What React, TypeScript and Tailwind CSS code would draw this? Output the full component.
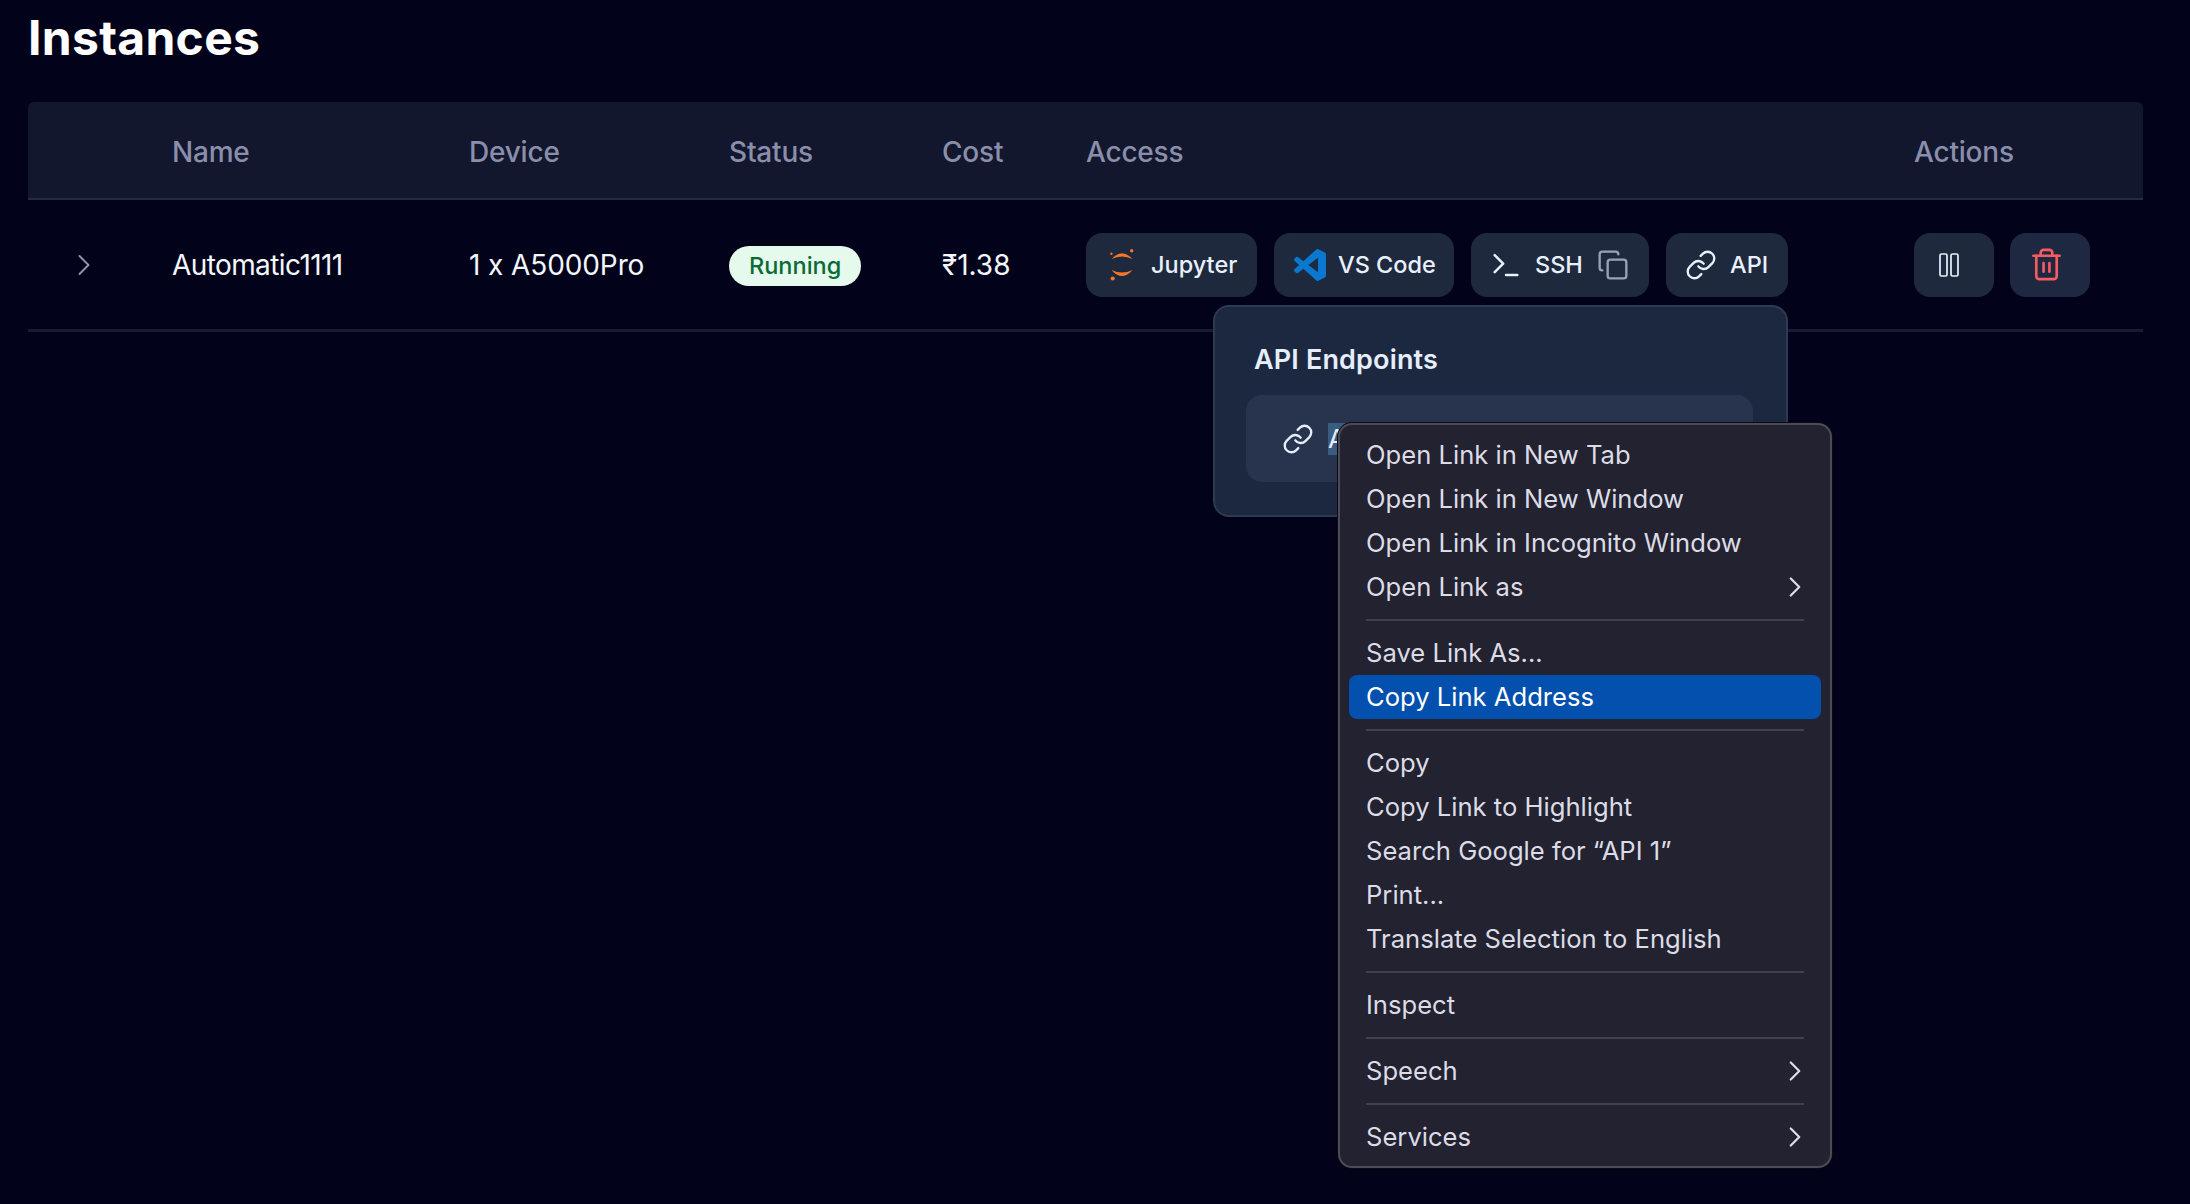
import React from 'react';
import { ChevronRight, Copy, Link, Terminal, Trash2 } from 'lucide-react';

const columns = 'grid grid-cols-[144px_297px_260px_213px_144px_828px_1fr] items-center';

const JupyterLogo = () => (
  <svg viewBox="0 0 24 32" className="w-[24px] h-[32px] text-[#f37726]" fill="currentColor">
    <path d="M1.5 10Q12 -1.5 22.5 10Q12 5 1.5 10Z" />
    <path d="M1.5 21Q12 33 22.5 21Q12 26 1.5 21Z" />
    <circle cx="21.7" cy="1.8" r="1.7" />
    <circle cx="1.4" cy="4.7" r="1.2" />
    <circle cx="2.7" cy="29.5" r="2.1" />
  </svg>
);

const VsCodeLogo = () => (
  <svg viewBox="0 0 24 24" className="w-[32px] h-[32px] text-[#0a78d0]" fill="currentColor">
    <path d="M23.15 2.587L18.21.21a1.494 1.494 0 0 0-1.705.29l-9.46 8.63-4.12-3.128a.999.999 0 0 0-1.276.057L.327 7.261A1 1 0 0 0 .326 8.74L3.899 12 .326 15.26a1 1 0 0 0 .001 1.479L1.65 17.94a.999.999 0 0 0 1.276.057l4.12-3.128 9.46 8.63a1.492 1.492 0 0 0 1.704.29l4.942-2.377A1.5 1.5 0 0 0 24 20.06V3.939a1.5 1.5 0 0 0-.85-1.352zm-5.146 14.861L10.826 12l7.178-5.448v10.896z" />
  </svg>
);

const PauseIcon = () => (
  <svg viewBox="0 0 20 24" className="w-[20px] h-[24px]" fill="none" stroke="#e8f0fb" strokeWidth="1.7">
    <rect x="1" y="1" width="7" height="22" rx="1.5" />
    <rect x="12" y="1" width="7" height="22" rx="1.5" />
  </svg>
);

const AccessButton = ({ className, children }: { className: string; children: React.ReactNode }) => (
  <button className={`flex items-center shrink-0 h-[64px] rounded-[16px] bg-[#1e293d] text-[23.5px] leading-none font-medium text-[#e8f0fb] ${className}`}>
    {children}
  </button>
);

const menuGroups = [
  [
    { label: 'Open Link in New Tab' },
    { label: 'Open Link in New Window' },
    { label: 'Open Link in Incognito Window' },
    { label: 'Open Link as', more: true },
  ],
  [{ label: 'Save Link As...' }, { label: 'Copy Link Address', active: true }],
  [
    { label: 'Copy' },
    { label: 'Copy Link to Highlight' },
    { label: 'Search Google for “API 1”' },
    { label: 'Print...' },
    { label: 'Translate Selection to English' },
  ],
  [{ label: 'Inspect' }],
  [{ label: 'Speech', more: true }],
  [{ label: 'Services', more: true }],
];

export default function App() {
  return (
    <div className="relative w-[2190px] h-[1204px] overflow-hidden bg-[#02031a] pl-[28px] pr-[47px] font-['Inter',sans-serif] text-white">
      <h1 className="h-[102px] pt-[12px] text-[48px] leading-[52px] font-bold tracking-[0.3px]">Instances</h1>

      {/* Table */}
      <div className={`${columns} h-[98px] pt-[4px] rounded-t-[6px] border-b-2 border-[#242a40] bg-[#12172e] text-[28px] tracking-[-0.2px] font-medium text-[#8b8eab]`}>
        <div />
        <div>Name</div>
        <div>Device</div>
        <div>Status</div>
        <div>Cost</div>
        <div>Access</div>
        <div>Actions</div>
      </div>
      <div className={`${columns} h-[132px] border-b-[3px] border-[#1a1b30] text-[28px] text-[#f3f6fb]`}>
        <div className="pl-[38px]">
          <ChevronRight className="w-[36px] h-[36px] text-[#8f92a8]" strokeWidth={1.3} />
        </div>
        <div className="tracking-[-0.6px]">Automatic1111</div>
        <div className="tracking-[-0.1px]">1 x A5000Pro</div>
        <div>
          <span className="inline-flex items-center h-[40px] px-[20px] rounded-full bg-[#e5f9ec] text-[23.5px] font-medium text-[#0a6b36]">Running</span>
        </div>
        <div>₹1.38</div>
        <div className="flex gap-[17px]">
          <AccessButton className="w-[171px] pl-[24px] gap-[17px]">
            <JupyterLogo />
            Jupyter
          </AccessButton>
          <AccessButton className="w-[180px] pl-[20px] gap-[12px]">
            <VsCodeLogo />
            VS Code
          </AccessButton>
          <AccessButton className="w-[178px] pl-[18px]">
            <Terminal className="w-[34px] h-[34px] shrink-0" strokeWidth={1.75} />
            <span className="ml-[12px]">SSH</span>
            <Copy className="ml-[14px] w-[32px] h-[32px] text-[#9aa1b5]" strokeWidth={1.75} />
          </AccessButton>
          <AccessButton className="w-[122px] pl-[19px] gap-[13px]">
            <Link className="w-[32px] h-[32px]" strokeWidth={1.75} />
            API
          </AccessButton>
        </div>
        <div className="flex gap-[16px]">
          <button className="flex items-center justify-center w-[80px] h-[64px] pr-[10px] rounded-[16px] bg-[#1e293d]">
            <PauseIcon />
          </button>
          <button className="flex items-center justify-center w-[80px] h-[64px] pr-[8px] rounded-[16px] bg-[#1e2840]">
            <Trash2 className="w-[35px] h-[35px] text-[#f85c63]" strokeWidth={1.8} />
          </button>
        </div>
      </div>

      {/* API popover */}
      <div className="absolute left-[1213px] top-[305px] w-[575px] h-[212px] rounded-[16px] border-2 border-[#2c3a52] bg-[#1c2840] pl-[39px] pt-[37px]">
        <div className="text-[27px] leading-[32px] font-semibold tracking-[0.15px] text-[#e6edfb]">API Endpoints</div>
        <div className="absolute left-[31px] top-[88px] flex items-center w-[507px] h-[87px] rounded-[16px] bg-[#28344e] pl-[36px]">
          <Link className="w-[32px] h-[32px] text-[#e6edfb]" strokeWidth={1.75} />
          <span className="ml-[14px] bg-[#3b5c80] text-[26px] leading-[32px] text-[#e6edfb]">API 1</span>
        </div>
      </div>

      {/* Context menu */}
      <div className="absolute left-[1338px] top-[423px] w-[494px] h-[745px] rounded-[14px] border-2 border-[#4c4b57] bg-[#232230] px-[9px] pt-[8px] text-[25.6px] text-[#dcdce6] shadow-[0_0_0_1px_#0a0a12]">
        {menuGroups.map((group, i) => (
          <div key={i}>
            {i > 0 && <div className="mx-[17px] my-[10px] h-[2px] bg-[#41404c]" />}
            {group.map((item) => (
              <div
                key={item.label}
                className={`flex items-center justify-between h-[44px] pl-[17px] pr-[9px] rounded-[8px] ${item.active ? 'bg-[#0350ae] text-white' : ''}`}
              >
                <span>{item.label}</span>
                {item.more && <ChevronRight className="w-[34px] h-[34px]" strokeWidth={1.6} />}
              </div>
            ))}
          </div>
        ))}
      </div>
    </div>
  );
}
